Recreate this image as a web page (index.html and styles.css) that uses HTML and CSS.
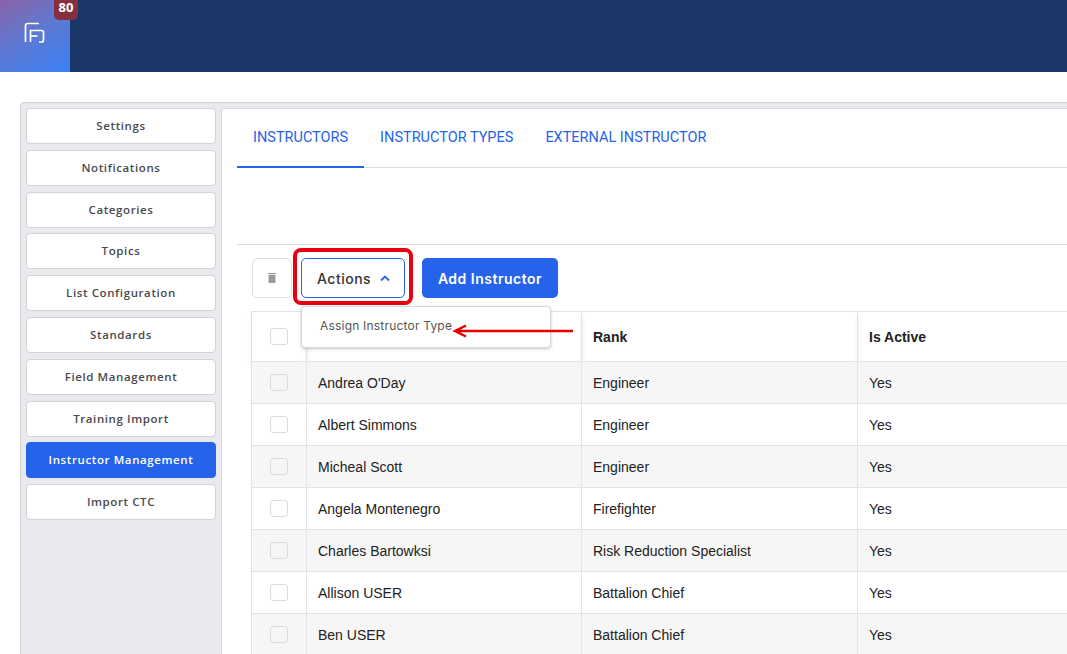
FILE: index.html
```html
<!DOCTYPE html>
<html lang="en">
<head>
    <meta charset="UTF-8">
    <title>Instructor Management</title>
    <link rel="stylesheet" href="styles.css">
</head>
<body>

<div class="topbar">
    <div class="logo">
        <svg width="22" height="22" viewBox="0 0 22 22" fill="none" stroke="#fff" stroke-width="1.7">
            <path d="M1.5 20V3.5a2 2 0 0 1 2-2H15"/>
            <path d="M6.5 20V8.5h11a2 2 0 0 1 2 2v7.500a2 2 0 0 1-2 2H15"/>
            <path d="M6.500 14h7"/>
        </svg>
        <span class="badge">80</span>
    </div>
</div>

<div class="panel">
    <div class="sidebar">
        <div class="side-item">Settings</div>
        <div class="side-item">Notifications</div>
        <div class="side-item">Categories</div>
        <div class="side-item">Topics</div>
        <div class="side-item">List Configuration</div>
        <div class="side-item">Standards</div>
        <div class="side-item">Field Management</div>
        <div class="side-item">Training Import</div>
        <div class="side-item active">Instructor Management</div>
        <div class="side-item">Import CTC</div>
    </div>

    <div class="content">
        <div class="tabs">
            <div class="tab current">INSTRUCTORS</div>
            <div class="tab">INSTRUCTOR TYPES</div>
            <div class="tab">EXTERNAL INSTRUCTOR</div>
        </div>
        <div class="spacer"></div>

        <div class="toolbar">
            <button class="trash-btn">
                <svg width="8" height="10" viewBox="0 0 8 10" fill="#9a9a9a"><path d="M0 0h8v1.300H0zM.6 2h6.800v8H.6z"/></svg>
            </button>
            <div class="actions-wrap">
                <button class="actions-btn">Actions
                    <svg width="10" height="7" viewBox="0 0 10 7" fill="none" stroke="#2563eb" stroke-width="1.800"><path d="M1 5.500l4-4 4 4"/></svg>
                </button>
                <div class="red-box"></div>
                <div class="menu">Assign Instructor Type</div>
                <svg class="red-arrow" width="122" height="16" viewBox="0 0 122 16" fill="none" stroke="#e60000" stroke-width="2.500"><path d="M121 8H3M14 2.500L3 8l11 5.500"/></svg>
            </div>
            <button class="add-btn">Add Instructor</button>
        </div>

        <table class="grid">
            <colgroup>
                <col class="c-check"><col class="c-name"><col class="c-rank"><col class="c-active">
            </colgroup>
            <thead>
                <tr><th><span class="check"></span></th><th>Name</th><th>Rank</th><th>Is Active</th></tr>
            </thead>
            <tbody>
                <tr><td><span class="check"></span></td><td>Andrea O'Day</td><td>Engineer</td><td>Yes</td></tr>
                <tr><td><span class="check"></span></td><td>Albert Simmons</td><td>Engineer</td><td>Yes</td></tr>
                <tr><td><span class="check"></span></td><td>Micheal Scott</td><td>Engineer</td><td>Yes</td></tr>
                <tr><td><span class="check"></span></td><td>Angela Montenegro</td><td>Firefighter</td><td>Yes</td></tr>
                <tr><td><span class="check"></span></td><td>Charles Bartowksi</td><td>Risk Reduction Specialist</td><td>Yes</td></tr>
                <tr><td><span class="check"></span></td><td>Allison USER</td><td>Battalion Chief</td><td>Yes</td></tr>
                <tr><td><span class="check"></span></td><td>Ben USER</td><td>Battalion Chief</td><td>Yes</td></tr>
            </tbody>
        </table>
    </div>
</div>

</body>
</html>
```

FILE: styles.css
```css
html, body {
    margin: 0;
    height: 654px;
    overflow: hidden;
    background: #fff;
    font-family: "Liberation Sans", Arial, sans-serif;
}

.topbar {
    height: 72px;
    background: #1b3768;
}

.logo {
    position: relative;
    width: 70px;
    height: 72px;
    display: flex;
    align-items: center;
    justify-content: center;
    padding: 0 0 0 0;
    background: linear-gradient(150deg, #8a63a8 0%, #5f78d0 45%, #3b82f6 100%);
}

.logo svg {
    margin: 0 0 0 0;
    transform: translateY(-3px);
}

.badge {
    position: absolute;
    left: 54px;
    top: 0;
    width: 24px;
    height: 20px;
    border-radius: 0 0 5px 5px;
    background: #84303f;
    color: #fff;
    font: 700 13px/15px "Open Sans", sans-serif;
    text-align: center;
}

.panel {
    display: flex;
    gap: 5px;
    width: 1100px;
    height: 560px;
    margin: 30px 0 0 20px;
    padding: 5px;
    box-sizing: border-box;
    background: #e9eaee;
    border: 1px solid #cfd0d4;
    border-radius: 4px 0 0 0;
}

.sidebar {
    width: 190px;
    flex: none;
    display: flex;
    flex-direction: column;
    gap: 5.800px;
}

.side-item {
    height: 36px;
    box-sizing: border-box;
    background: #fff;
    border: 1px solid #d2d3d6;
    border-radius: 4px;
    text-align: center;
    font: 600 11.500px/34px "Open Sans", sans-serif;
    letter-spacing: 0.6px;
    color: #4a4a4d;
}

.side-item.active {
    background: #2563eb;
    border-color: #2563eb;
    color: #fff;
}

.content {
    flex: 1;
    background: #fff;
    border: 1px solid #d8d9dc;
    border-radius: 4px 0 0 0;
    padding: 0 0 0 15px;
}

.tabs {
    display: flex;
    height: 58px;
    border-bottom: 1px solid #d9dadd;
}

.tab {
    padding: 0 16px;
    font: 400 14.500px/58px Roboto, sans-serif;
    color: #2563eb;
}

.tab.current {
    height: 58px;
    box-sizing: content-box;
    border-bottom: 2px solid #2563eb;
    height: 57px;
}

.spacer {
    height: 76px;
    border-bottom: 1px solid #d9dadd;
}

.toolbar {
    display: flex;
    align-items: flex-start;
    padding: 13px 0 0 15px;
    height: 53px;
    box-sizing: content-box;
}

.trash-btn {
    width: 40px;
    height: 40px;
    padding: 0;
    background: #fff;
    border: 1px solid #dfe0e3;
    border-radius: 5px;
}

.actions-wrap {
    position: relative;
    margin: 0 17px 0 9px;
}

.actions-btn {
    display: flex;
    align-items: center;
    gap: 9px;
    width: 104px;
    height: 40px;
    padding: 0 0 0 15px;
    box-sizing: border-box;
    background: #fff;
    border: 1px solid #2563eb;
    border-radius: 5px;
    font: 500 14px "Inter", sans-serif;
    letter-spacing: 0.5px;
    color: #333;
}

.red-box {
    position: absolute;
    left: -8px;
    top: -10px;
    width: 120px;
    height: 57px;
    box-sizing: border-box;
    border: 4px solid #e60012;
    border-radius: 8px;
}

.menu {
    position: absolute;
    left: 0;
    top: 48px;
    z-index: 2;
    width: 250px;
    height: 42px;
    box-sizing: border-box;
    padding-left: 18px;
    background: #fff;
    border: 1px solid #d4d8de;
    border-radius: 4px;
    box-shadow: 0 1px 3px rgba(60, 70, 90, 0.3);
    font: 400 12px/38px "Inter", sans-serif;
    letter-spacing: 0.2px;
    color: #555;
}

.red-arrow {
    position: absolute;
    left: 151px;
    top: 65px;
    z-index: 3;
}

.add-btn {
    width: 136px;
    height: 40px;
    padding: 0;
    background: #2563eb;
    border: 0;
    border-radius: 5px;
    font: 600 14px "Inter", sans-serif;
    letter-spacing: 0.5px;
    color: #fff;
}

.grid {
    margin-left: 14px;
    width: 900px;
    table-layout: fixed;
    border-collapse: collapse;
    font-size: 14px;
    color: #222;
}

.c-check { width: 55px; }
.c-name { width: 275px; }
.c-rank { width: 276px; }

.grid th {
    height: 49px;
    padding: 0 0 0 11px;
    text-align: left;
    font-weight: 700;
    border: 1px solid #e2e4e8;
    border-bottom: 0;
    box-shadow: 0 3px 5px rgba(0, 0, 0, 0.1);
}

.grid td {
    height: 41px;
    padding: 0 0 0 11px;
    border: 1px solid #e2e4e8;
}

.grid th:first-child, .grid td:first-child {
    padding: 0;
    text-align: center;
}

.grid tbody tr:nth-child(odd) {
    background: #f6f6f6;
}

.check {
    display: inline-block;
    width: 16px;
    height: 15px;
    vertical-align: middle;
    background: #fff;
    border: 1px solid #dcdcdc;
    border-radius: 3px;
}

tbody tr:nth-child(odd) .check {
    background: #f6f6f6;
}
```
